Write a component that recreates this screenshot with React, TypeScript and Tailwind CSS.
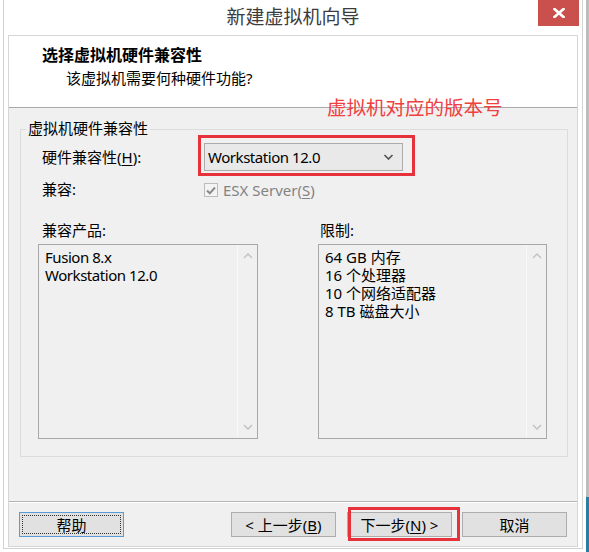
import React from "react";

const F = "font-['Noto_Sans','Noto_Sans_CJK_SC',sans-serif]";

function ChevronUp() {
  return (
    <svg width="10" height="6" viewBox="0 0 10 6">
      <path d="M1 5 L5 1 L9 5" fill="none" stroke="#c4c4c4" strokeWidth="1.5" />
    </svg>
  );
}
function ChevronDown({ color = "#c4c4c4", w = 10 }: { color?: string; w?: number }) {
  return (
    <svg width={w} height="6" viewBox="0 0 10 6">
      <path d="M1 1 L5 5 L9 1" fill="none" stroke={color} strokeWidth="1.6" />
    </svg>
  );
}

function ListBox({ items, w, tight }: { items: string[]; w: string; tight?: boolean }) {
  return (
    <div className={`${w} h-[195px] mt-[4px] border border-[#a7a7a7] bg-[#f0f0f0] flex`}>
      <div
        className={`flex-1 pt-[3px] pl-[6px] text-[15px] leading-[18px] text-black ${tight ? "tracking-[-0.45px]" : ""}`}
      >
        {items.map((t) => (
          <div key={t}>{t}</div>
        ))}
      </div>
      <div className="w-[20px] border-l border-[#f8f8f8] flex flex-col items-center justify-between pt-[8px] pb-[8px]">
        <ChevronUp />
        <ChevronDown />
      </div>
    </div>
  );
}

function Btn({ children, extra = "" }: { children: React.ReactNode; extra?: string }) {
  return (
    <div
      className={`w-[105px] h-[25px] bg-[#e1e1e1] border border-[#adadad] flex items-center justify-center text-[15px] leading-[20px] text-black ${extra}`}
    >
      {children}
    </div>
  );
}

export default function App() {
  return (
    <div className={`w-[589px] h-[552px] bg-white relative overflow-hidden flex ${F}`}>
      <div className="w-[3px] bg-white" />
      <div className="w-[580px] h-[549px] border-l border-r border-b border-[#d2d2d2] flex flex-col">
        {/* Title bar */}
        <div className="h-[35px] relative flex items-center justify-center">
          <span className="text-[19px] leading-[24px] text-[#3c3c3c] -mt-[2px]">新建虚拟机向导</span>
          <div className="absolute right-[3px] top-0 w-[41px] h-[26px] bg-[#c9504c] flex items-center justify-center">
            <svg width="12" height="10" viewBox="0 0 12 10">
              <path d="M1.5 1 L10.5 9 M10.5 1 L1.5 9" stroke="white" strokeWidth="2.6" strokeLinecap="square" />
            </svg>
          </div>
        </div>
        {/* Content */}
        <div className="mx-[4px] border border-[#d6d6d6] flex flex-col">
          <div className="h-[72px] bg-white border-b border-[#a9a9a9]">
            <div className="pl-[33px] pt-[9px] text-[16px] leading-[20px] font-bold text-black">选择虚拟机硬件兼容性</div>
            <div className="pl-[57px] mt-[3px] text-[15px] leading-[20px] text-black">该虚拟机需要何种硬件功能?</div>
          </div>
          <div className="h-[394px] bg-[#f0f0f0] pt-[21px] pl-[11px] border-b border-[#b4b4b4]">
            <div className="w-[548px] h-[328px] border border-[#dcdcdc] relative">
              <div className="absolute left-[5px] -top-[12px] px-[2px] bg-[#f0f0f0] text-[15px] leading-[20px] text-black">
                虚拟机硬件兼容性
              </div>
              {/* row 1 */}
              <div className="mt-[5px] flex items-center pl-[21px]">
                <div className="w-[156px] pt-[2px] text-[15px] leading-[20px] text-black">
                  硬件兼容性(<span className="underline underline-offset-2">H</span>):
                </div>
                <div className="border-[3px] border-[#e5323b] pt-[5px] pl-[3px] pr-[9px] pb-[2px]">
                  <div className="w-[199px] h-[28px] bg-[#e9e9e9] border border-[#acacac] flex items-center justify-between pl-[3px] pr-[8px]">
                    <span className="text-[15px] leading-[20px] text-black tracking-[-0.45px]">Workstation 12.0</span>
                    <ChevronDown color="#505050" w={11} />
                  </div>
                </div>
              </div>
              {/* row 2 */}
              <div className="mt-[3px] h-[22px] flex items-center pl-[21px]">
                <div className="w-[162px] text-[15px] leading-[20px] text-black -mt-[3px]">兼容:</div>
                <div className="w-[14px] h-[14px] bg-[#f4f4f4] border border-[#bcbcbc] flex items-center justify-center">
                  <svg width="10" height="9" viewBox="0 0 10 9">
                    <path d="M1 4.5 L3.8 7.3 L9 1.5" fill="none" stroke="#8a8a8a" strokeWidth="2" />
                  </svg>
                </div>
                <span className="ml-[5px] text-[15px] leading-[20px] text-[#838383]">
                  ESX Server(<span className="underline underline-offset-2">S</span>)
                </span>
              </div>
              {/* row 3 */}
              <div className="mt-[19px] flex pl-[17px] gap-[60px]">
                <div className="flex flex-col">
                  <div className="pl-[4px] h-[20px] text-[15px] leading-[20px] text-black">兼容产品:</div>
                  <ListBox w="w-[220px]" tight items={["Fusion 8.x", "Workstation 12.0"]} />
                </div>
                <div className="flex flex-col">
                  <div className="pl-[2px] h-[20px] text-[15px] leading-[20px] text-black">限制:</div>
                  <ListBox
                    w="w-[229px]"
                    items={["64 GB 内存", "16 个处理器", "10 个网络适配器", "8 TB 磁盘大小"]}
                  />
                </div>
              </div>
            </div>
          </div>
          <div className="h-[44px] bg-[#f0f0f0] border-t border-white flex items-start pt-[9px] pl-[10px] pr-[10px]">
            <div className="w-[105px] h-[25px] bg-[#e1e1e1] border border-[#5a9bd5] p-[2px]">
              <div className="w-full h-full border border-dotted border-[#333] flex items-center justify-center text-[15px] leading-[20px] text-black">
                帮助
              </div>
            </div>
            <div className="flex-1" />
            <Btn>
              &lt; 上一步(<span className="underline underline-offset-2">B</span>)
            </Btn>
            <div className="ml-[11px] relative">
              <Btn>
                下一步(<span className="underline underline-offset-2">N</span>) &gt;
              </Btn>
              <div className="absolute left-[1px] -right-[8px] -top-[5px] -bottom-[4px] border-[3px] border-[#e5323b]" />
            </div>
            <div className="ml-[10px]">
              <Btn>取消</Btn>
            </div>
          </div>
        </div>
      </div>
      <div className="w-[6px] flex justify-end">
        <div className="w-[3px] h-full flex flex-col">
          <div className="h-[497px] bg-[#bdbdbd]" />
          <div className="flex-1 bg-[#2a7fa0]" />
        </div>
      </div>
      {/* annotation text */}
      <div className="absolute left-[327px] top-[96px] text-[19.5px] leading-[24px] text-[#f0403f]">虚拟机对应的版本号</div>
    </div>
  );
}
